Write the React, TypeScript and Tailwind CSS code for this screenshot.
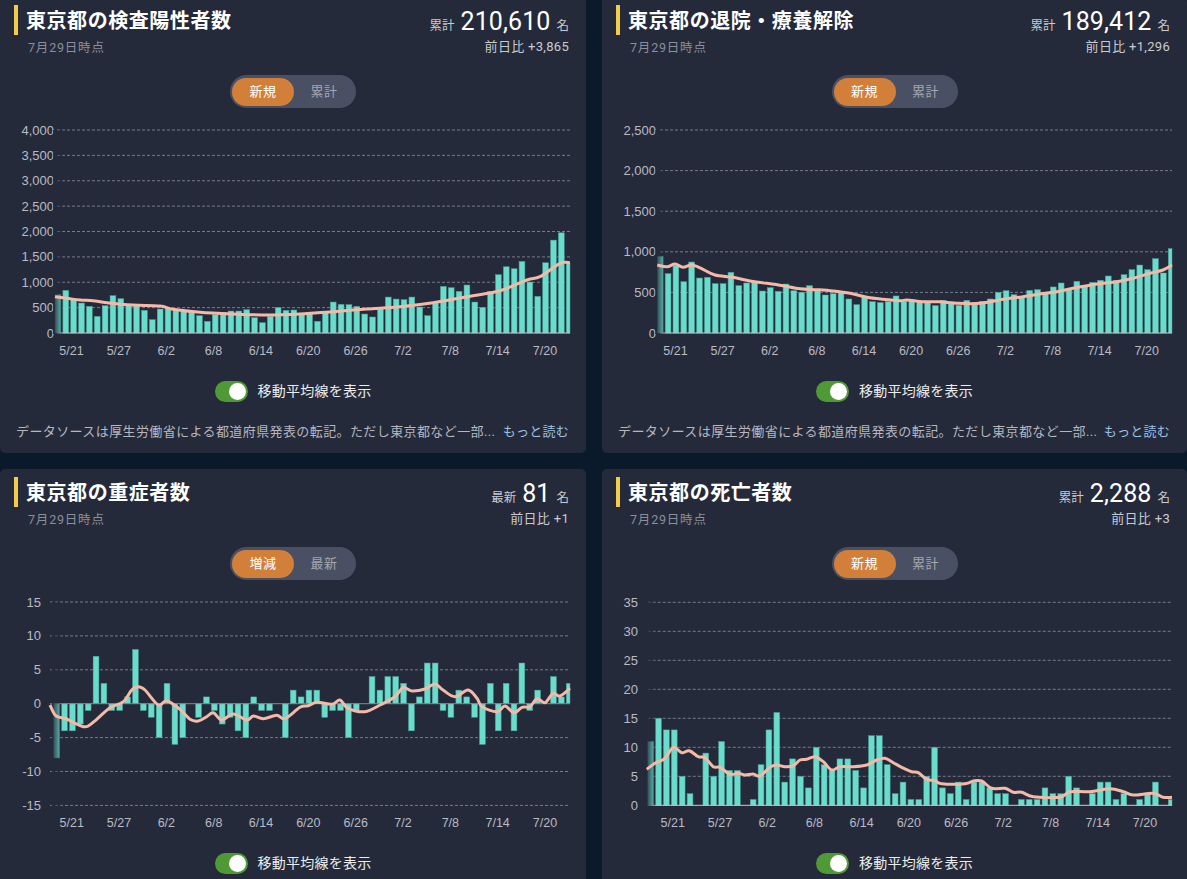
import { useId } from "react";

const LABELS = ["5/21", "5/27", "6/2", "6/8", "6/14", "6/20", "6/26", "7/2", "7/8", "7/14", "7/20"];
const BAR_END = 566.3;
const PLOT_END = 570;
const BAR_WIDTH = 5.8;

type Point = [number, number];

type ChartConfig = {
  values: number[];
  ticks: number[];
  zeroY: number;
  scale: number;
  labelRight: number;
  gridStart: number;
  barStart: number;
  labelStart: number;
  labelEnd: number;
  average: Point[];
  zeroLine?: boolean;
};

// 新規陽性者
const positive: ChartConfig = {
  values: [
    754, 840, 656, 590, 525, 328, 538, 735, 676, 558, 538, 446, 262, 472, 492, 446, 426, 407, 341, 230, 361, 407, 433,
    433, 459, 302, 203, 328, 499, 446, 453, 361, 407, 230, 407, 610, 564, 558, 525, 374, 315, 472, 708, 669, 656, 708,
    512, 341, 590, 918, 892, 820, 945, 610, 505, 820, 1148, 1305, 1266, 1410, 1004, 722, 1384, 1830, 1975, 1378,
  ],
  ticks: [0, 500, 1000, 1500, 2000, 2500, 3000, 3500, 4000],
  zeroY: 215,
  scale: 0.05075,
  labelRight: 54,
  gridStart: 57,
  barStart: 55,
  labelStart: 71.5,
  labelEnd: 545,
  average: [
    [55, 178.7], [67, 180.3], [80, 182], [93, 182.7], [107, 184.7], [133, 187], [160, 188], [173, 191.3], [200, 194.3],
    [233, 196], [267, 197], [300, 196], [333, 193.7], [367, 191], [400, 188.7], [433, 184.7], [467, 178.7], [500, 172.7],
    [527, 162], [540, 158.7], [560, 145.3], [570, 144.7],
  ],
};

// 退院・療養解除
const recovered: ChartConfig = {
  values: [
    944, 731, 829, 632, 874, 677, 686, 608, 608, 747, 583, 616, 636, 517, 558, 513, 603, 521, 501, 583, 534, 468, 484,
    501, 419, 349, 443, 386, 374, 386, 456, 390, 411, 386, 386, 337, 402, 382, 341, 402, 361, 390, 419, 501, 521, 472,
    452, 525, 534, 501, 567, 616, 542, 636, 583, 624, 649, 702, 649, 718, 780, 837, 780, 915, 739, 1039,
  ],
  ticks: [0, 500, 1000, 1500, 2000, 2500],
  zeroY: 215,
  scale: 0.0812,
  labelRight: 54,
  gridStart: 58,
  barStart: 55.3,
  labelStart: 73.5,
  labelEnd: 544.7,
  average: [
    [55.3, 147], [65, 148.7], [73, 146], [81, 149.3], [90, 147], [101, 151.3], [113, 157], [131, 159.3], [148, 163],
    [165, 165.3], [181, 167.7], [198, 170.7], [215, 171.7], [231, 173], [248, 175.3], [265, 179.3], [281, 181.3],
    [298, 182.7], [305, 182], [321, 183.7], [338, 183.7], [355, 185.3], [378, 185.3], [401, 181.3], [421, 178.7],
    [438, 176], [455, 173.7], [471, 170.3], [495, 166], [515, 163.7], [531, 160.3], [548, 155.3], [561, 152], [570, 147],
  ],
};

// 重症者の増減
const severe: ChartConfig = {
  values: [
    -8, -4, -4, -3, -1, 7, 3, -1, -1, 1, 8, -1, -2, -5, 3, -6, -5, 0, -2, 1, -1, -3, -2, -4, -5, 1, -1, -1, 0, -5, 2, 1,
    2, 2, -2, -1, -1, -5, -1, 0, 4, 2, 4, 4, 3, -4, 1, 6, 6, -1, -2, 2, 1, -2, -6, 3, -4, 3, -4, 6, -1, 2, 0, 4, 1, 3,
  ],
  ticks: [15, 10, 5, 0, -5, -10, -15],
  zeroY: 113.7,
  scale: 6.78,
  labelRight: 41,
  gridStart: 50,
  barStart: 53.7,
  labelStart: 71.7,
  labelEnd: 545,
  zeroLine: true,
  average: [
    [50, 115], [55, 125], [60, 127.3], [66.7, 129], [75, 133.3], [83.3, 136.7], [88.3, 136], [96.7, 129.3], [110, 117.7],
    [123.3, 111.7], [131.7, 100], [138.3, 96.7], [145, 100], [158.3, 115], [166.7, 110.7], [180, 119.3], [190, 129.3],
    [198.3, 131], [206.7, 126.7], [213.3, 122.7], [221.7, 130], [233.3, 124], [246.7, 130], [253.3, 126], [263.3, 128.7],
    [276.7, 125.3], [285, 128.7], [300, 117.3], [308, 115.7], [317, 112.3], [332, 114.3], [340, 110], [348, 118.3],
    [365, 121.7], [380, 115], [395, 106.7], [403, 97.7], [412, 101], [425, 99], [435, 94], [443, 100], [455, 106.7],
    [468, 100], [477, 108.3], [482, 116.7], [497, 121.7], [505, 116], [514, 122.7], [522, 117.3], [530, 116.7],
    [537, 108.7], [545, 112.7], [553, 103.3], [560, 106], [570, 98.3],
  ],
};

// 死亡者
const deaths: ChartConfig = {
  values: [
    11, 15, 13, 13, 5, 2, 0, 9, 5, 11, 6, 6, 0, 1, 7, 13, 16, 4, 8, 5, 3, 10, 7, 6, 8, 8, 6, 3, 12, 12, 7, 2, 4, 1, 1, 5,
    10, 3, 2, 4, 1, 4, 4, 3, 2, 2, 0, 1, 1, 1, 3, 2, 2, 5, 3, 0, 2, 4, 4, 1, 2, 0, 1, 2, 4, 0, 1,
  ],
  ticks: [0, 5, 10, 15, 20, 25, 30, 35],
  zeroY: 215.3,
  scale: 5.8,
  labelRight: 36,
  gridStart: 45.7,
  barStart: 45.7,
  labelStart: 70.7,
  labelEnd: 543,
  average: [
    [44.7, 179.3], [53, 173.3], [63, 168.3], [71.3, 157.3], [79.7, 162.7], [87.3, 160.7], [96.3, 166.7], [103, 167.7],
    [111.3, 176.7], [118, 177.3], [128, 184.3], [136.3, 183.3], [143, 185], [151.3, 184], [158, 186], [168, 177.3],
    [174.7, 175], [183, 176.7], [191.3, 175.7], [198, 170], [204.7, 169.3], [213, 166.7], [221.3, 171.7], [229.7, 180],
    [238, 176.7], [251.3, 176.7], [264.7, 175], [274.7, 170], [283, 168.3], [291.3, 172.7], [299.7, 177.3], [309.7, 181.7],
    [316.3, 182.7], [324.7, 189.3], [333, 190.7], [339.7, 193.7], [363, 193.7], [371.3, 191], [379.7, 191], [389.7, 198.3],
    [403, 198.3], [411.3, 202.3], [419.7, 202.3], [431.3, 206.7], [458, 207.3], [468, 201.7], [488, 201.7], [508, 198.7],
    [521.3, 201.7], [531.3, 205], [551.3, 203.3], [561.3, 207.3], [570, 207.3],
  ],
};

function smoothPath(points: Point[]) {
  let d = `M${points[0][0]} ${points[0][1]}`;
  for (let i = 0; i < points.length - 1; i++) {
    const p0 = points[Math.max(i - 1, 0)];
    const p1 = points[i];
    const p2 = points[i + 1];
    const p3 = points[Math.min(i + 2, points.length - 1)];
    const c1x = p1[0] + (p2[0] - p0[0]) / 6;
    const c1y = p1[1] + (p2[1] - p0[1]) / 6;
    const c2x = p2[0] - (p3[0] - p1[0]) / 6;
    const c2y = p2[1] - (p3[1] - p1[1]) / 6;
    d += ` C${c1x} ${c1y} ${c2x} ${c2y} ${p2[0]} ${p2[1]}`;
  }
  return d;
}

function Chart({ config }: { config: ChartConfig }) {
  const fadeId = useId();
  const { values, ticks, zeroY, scale, labelRight, gridStart, barStart, labelStart, labelEnd, average, zeroLine } = config;
  const step = (BAR_END - barStart) / (values.length - 1);
  const labelStep = (labelEnd - labelStart) / (LABELS.length - 1);

  return (
    <svg width="585" height="245" className="block font-['Liberation_Sans',sans-serif]">
      <defs>
        <linearGradient id={fadeId}>
          <stop offset="0" stopColor="#252a3b" stopOpacity="0.95" />
          <stop offset="1" stopColor="#252a3b" stopOpacity="0" />
        </linearGradient>
      </defs>
      {ticks.map((t) => {
        const y = zeroY - t * scale;
        return (
          <g key={t}>
            <text x={labelRight} y={y + 4.5} textAnchor="end" className="fill-[#b9bbc3] text-[13px]">
              {t.toLocaleString("en-US")}
            </text>
            {t !== 0 && (
              <line x1={gridStart} x2={PLOT_END} y1={y} y2={y} className="stroke-[#777a88]" strokeDasharray="3 2" />
            )}
          </g>
        );
      })}
      {values.map((v, i) => {
        const x = barStart + i * step;
        const h = Math.abs(v) * scale;
        return (
          <rect
            key={i}
            x={x}
            y={v >= 0 ? zeroY - h : zeroY}
            width={Math.min(BAR_WIDTH, PLOT_END - x)}
            height={h}
            className="fill-[#69dccb] stroke-[#4d9f99]"
            strokeWidth="0.5"
          />
        );
      })}
      <line
        x1={gridStart}
        x2={PLOT_END}
        y1={zeroY}
        y2={zeroY}
        className={zeroLine ? "stroke-[#85868f]" : "stroke-[#c9cbd1]"}
      />
      <rect x={barStart - 2} y={12} width="11" height="204" fill={`url(#${fadeId})`} />
      <path d={smoothPath(average)} fill="none" className="stroke-[#f5b9a8]" strokeWidth="3" strokeLinejoin="round" />
      {LABELS.map((label, i) => (
        <text key={label} x={labelStart + i * labelStep} y={237} textAnchor="middle" className="fill-[#b9bbc3] text-[12.5px]">
          {label}
        </text>
      ))}
    </svg>
  );
}

function Card({
  title,
  statLabel,
  total,
  diff,
  tabs,
  config,
}: {
  title: string;
  statLabel: string;
  total: string;
  diff: string;
  tabs: [string, string];
  config: ChartConfig;
}) {
  return (
    <div className="h-[456px] rounded-[5px] bg-[#252a3b] pt-2">
      <div className="flex h-[70px] justify-between pl-[14px] pr-[17px]">
        <div>
          <div className="flex h-[30px] items-center border-l-4 border-[#f2cd4b] pl-2 pt-[2px] text-[20px] font-bold leading-none tracking-[0.55px] text-white">
            {title}
          </div>
          <div className="mt-[3px] pl-[14px] text-[12.5px] leading-5 tracking-[0.8px] text-[#8b8e99]">7月29日時点</div>
        </div>
        <div className="flex flex-col items-end">
          <div className="mt-1 flex items-baseline text-[#c9cad0]">
            <span className="text-[12.5px]">{statLabel}</span>
            <span className="mx-[6px] text-[25px] leading-[25px] tracking-[0.1px] text-white">{total}</span>
            <span className="text-[12.5px]">名</span>
          </div>
          <div className="mt-[3px] text-[13px] leading-4 tracking-[0.3px] text-[#c9cad0]">前日比 {diff}</div>
        </div>
      </div>
      <div className="flex justify-center">
        <div className="flex h-[33px] w-[126px] items-center rounded-full bg-[#4a5064] pl-[2px] text-[13px] tracking-[0.5px]">
          <div className="flex h-[28px] w-[62px] items-center justify-center rounded-[14px] bg-[#d17f39] text-white">
            {tabs[0]}
          </div>
          <div className="flex-1 pr-[2px] text-center text-[#a5a7ae]">{tabs[1]}</div>
        </div>
      </div>
      <div className="mt-[10px]">
        <Chart config={config} />
      </div>
      <div className="mt-[18px] flex h-[21px] items-center justify-center gap-[10px]">
        <div className="flex h-[21px] w-[33px] items-center justify-end rounded-full bg-[#4f9a37] pr-[2px]">
          <div className="h-[17px] w-[17px] rounded-full bg-white" />
        </div>
        <span className="text-[14px] tracking-[0.25px] text-[#eceded]">移動平均線を表示</span>
      </div>
      <div className="mt-5 flex h-5 items-center justify-between pl-4 pr-[17px] text-[13px]">
        <span className="tracking-[0.4px] text-[#b5b7bf]">データソースは厚生労働省による都道府県発表の転記。ただし東京都など一部...</span>
        <span className="tracking-[0.25px] text-[#9cc3e6]">もっと読む</span>
      </div>
    </div>
  );
}

export default function App() {
  return (
    <div className="h-[879px] overflow-hidden bg-[#0a1a2b] font-['Roboto','Noto_Sans_CJK_JP',sans-serif]">
      <div className="mt-[-3px] grid grid-cols-[586px_585px] gap-4">
        <Card title="東京都の検査陽性者数" statLabel="累計" total="210,610" diff="+3,865" tabs={["新規", "累計"]} config={positive} />
        <Card title="東京都の退院・療養解除" statLabel="累計" total="189,412" diff="+1,296" tabs={["新規", "累計"]} config={recovered} />
        <Card title="東京都の重症者数" statLabel="最新" total="81" diff="+1" tabs={["増減", "最新"]} config={severe} />
        <Card title="東京都の死亡者数" statLabel="累計" total="2,288" diff="+3" tabs={["新規", "累計"]} config={deaths} />
      </div>
    </div>
  );
}
